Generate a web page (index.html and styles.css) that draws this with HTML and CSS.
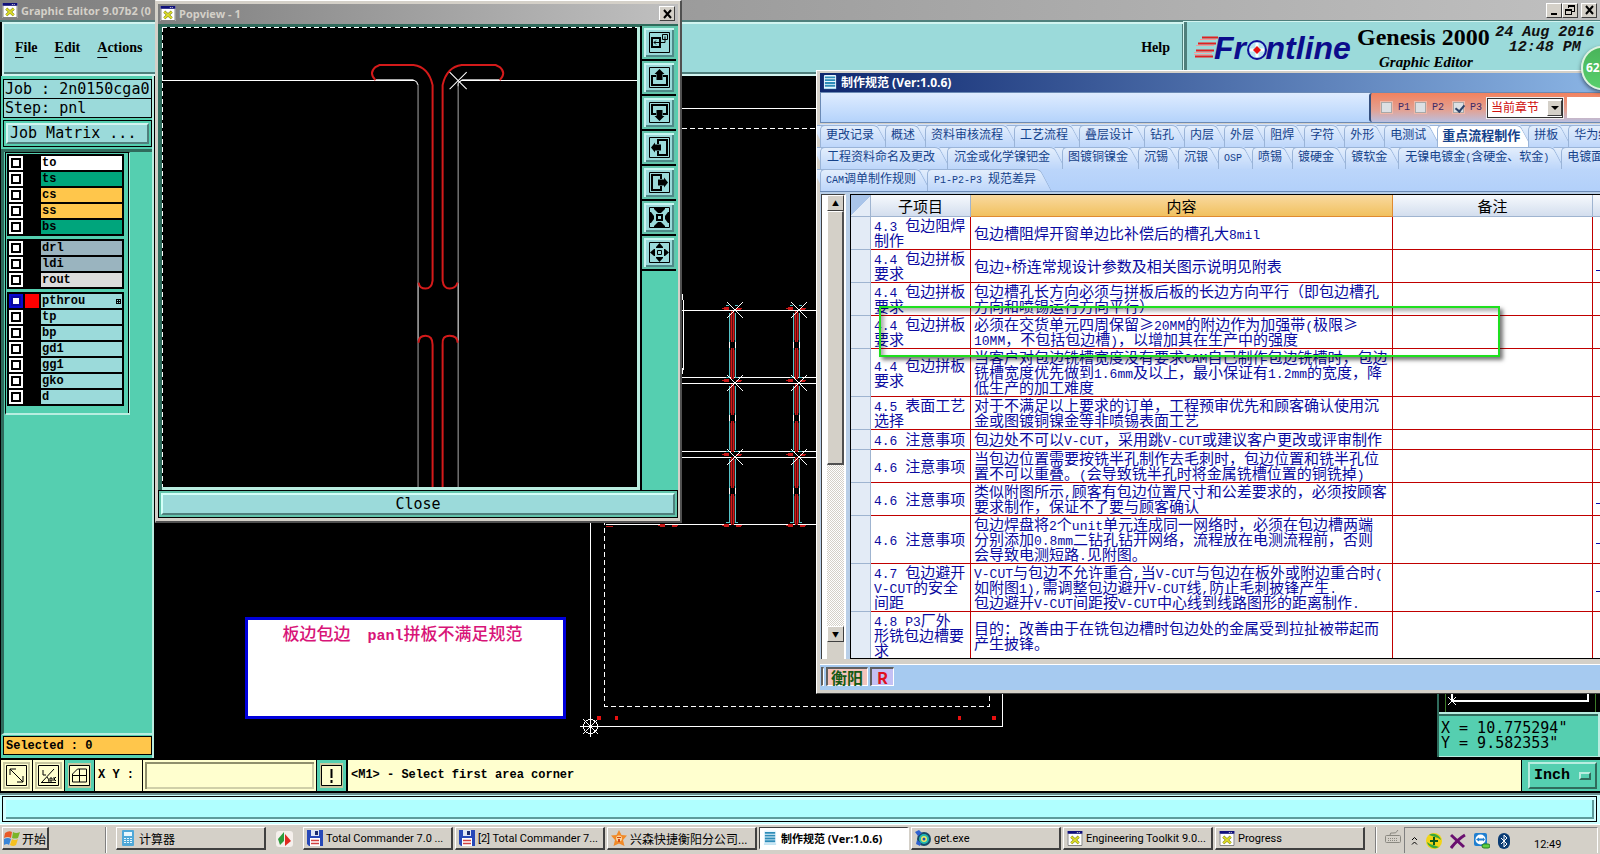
FILE: index.html
```html
<!DOCTYPE html>
<html lang="zh-CN">
<head>
<meta charset="utf-8">
<title>Graphic Editor 9.07b2</title>
<link rel="stylesheet" href="styles.css">
</head>
<body>
<svg class="defs" aria-hidden="true">
  <symbol id="xwin" viewBox="0 0 16 16"><path fill="#fff" d="M0 0h16v16H0z"/><path fill="#10107a" d="M0 0h16v3H0z"/><path fill="#ddd" d="M10 1h1v1h-1zM12 1h1v1h-1z"/><path d="M.5 3v12.500h15V3" fill="none" stroke="#777"/><path d="M4 6l8 7M12 6l-8 7" stroke="#777a20" stroke-width="3"/><path d="M4 6l8 7M12 6l-8 7" stroke="#dcdc28" stroke-width="2"/></symbol>
  <symbol id="doc" viewBox="0 0 16 16"><rect x="1" y="0" width="13" height="15" rx="1" fill="#e8f6ff"/><path d="M2 2.500h11M2 5.500h11M2 8.500h11M2 11.500h11" stroke="#2d8cb8" stroke-width="2"/><path d="M1 14.500h13" stroke="#9fd4ea"/></symbol>
  <symbol id="floppy" viewBox="0 0 16 16"><path fill="#2748b8" d="M0 0h16v16H2L0 14z"/><path fill="#dfe6f4" d="M4 0h8v6H4z"/><path fill="#1b2c70" d="M8 1h3v4H8z"/><path fill="#fff" d="M3 8h10v8H3z"/><path d="M4 10.500h8M4 13.500h8" stroke="#d04040" stroke-width="1.500"/></symbol>
</svg>

<main class="editor">
  <header class="titlebar">
    <svg width="16" height="15"><use href="#xwin"/></svg>
    <h1>Graphic Editor 9.07b2 (0</h1>
    <div class="winbtns">
      <button aria-label="Minimize"><svg width="11" height="10"><path d="M2 8h6v2H2z"/></svg></button>
      <button aria-label="Restore"><svg width="11" height="10"><path d="M3.500 0v3M3 .500h7M3 1.500h7M9.500 0v6M7 6.500h3M.500 4v6M0 4.500h7M0 5.500h7M6.500 4v6M0 9.500h7" fill="none" stroke="#000"/></svg></button>
      <button class="last" aria-label="Close editor"><svg width="11" height="10"><path d="M2 1l7 8M9 1L2 9" stroke="#000" stroke-width="2"/></svg></button>
    </div>
  </header>

  <div class="menurow">
    <nav class="menubar">
      <button><u>F</u>ile</button><button><u>E</u>dit</button><button><u>A</u>ctions</button><button class="help">Help</button>
    </nav>
    <section class="brand">
      <svg class="logo" width="165" height="34" viewBox="1191 31 165 34">
        <g stroke="#e02020" stroke-width="2"><path d="M1200 37.500h16M1196 43.500h18M1194 50.500h18M1193 56.500h18"/></g>
        <g stroke="#f39a9a"><path d="M1198 39.500h16M1194 45.500h18M1192 52.500h18M1192 54.500h18"/></g>
        <text x="1212" y="59" font-family="Liberation Sans, sans-serif" font-size="32" font-weight="bold" font-style="italic" fill="#0c0c8c">Fr<tspan fill="none">o</tspan>ntline</text>
        <circle cx="1255" cy="50" r="9" fill="#b8e6f0" stroke="#10109a" stroke-width="2"/><path d="M1255 43v14M1248 50h14" stroke="#fff" stroke-width="3"/><path d="M1255 46l4 4-4 4-4-4z" fill="#e81010"/>
      </svg>
      <div class="product"><strong>Genesis 2000</strong><em>Graphic Editor</em></div>
      <time>24 Aug 2016<br>12:48 PM</time>
    </section>
  </div>

  <div class="work">
    <aside class="side">
      <dl class="job"><div><dt>Job :</dt><dd>2n0150cga0</dd></div><div><dt>Step:</dt><dd>pnl</dd></div></dl>
      <div class="matrix"><button>Job Matrix ...</button></div>
      <div class="layers">
        <div class="frame">
          <div class="group">
            <label><input type="checkbox"><i></i><span class="w">to</span></label>
            <label><input type="checkbox"><i></i><span class="g">ts</span></label>
            <label><input type="checkbox"><i></i><span class="o">cs</span></label>
            <label><input type="checkbox"><i></i><span class="o">ss</span></label>
            <label><input type="checkbox"><i></i><span class="g">bs</span></label>
          </div>
          <div class="group">
            <label><input type="checkbox"><i></i><span class="s">drl</span></label>
            <label><input type="checkbox"><i></i><span class="s">ldi</span></label>
            <label><input type="checkbox"><i></i><span class="l">rout</span></label>
          </div>
          <div class="group">
            <label><input type="checkbox" checked><i class="red"></i><span>pthrou<svg width="5" height="5"><path d="M0 .500h5M0 2.500h5M0 4.500h5M.500 0v5M2.500 0v5M4.500 0v5" stroke="#000"/></svg></span></label>
            <label><input type="checkbox"><i></i><span>tp</span></label>
            <label><input type="checkbox"><i></i><span>bp</span></label>
            <label><input type="checkbox"><i></i><span>gd1</span></label>
            <label><input type="checkbox"><i></i><span>gg1</span></label>
            <label><input type="checkbox"><i></i><span>gko</span></label>
            <label><input type="checkbox"><i></i><span>d</span></label>
          </div>
        </div>
      </div>
      <div class="selected"><output>Selected : 0</output></div>
    </aside>

    <section class="canvas" aria-label="Panel view">
      <svg class="board" width="1446" height="682" viewBox="154 76 1446 682" fill="none" shape-rendering="crispEdges">
        <defs>
          <g id="seg"><path d="M.500 0v31M.500 37v31" stroke="#5c0c0c"/><path d="M-1.500 2v27M2.500 2v27M-1.500 39v27M2.500 39v27" stroke="#6a1010"/><path d="M-2.500 2v29M3.500 2v29M-2.500 37v29M3.500 37v29" stroke="#55c4c8"/><path d="M-2.500 31v6M3.500 31v6" stroke="#fff"/><path d="M-.500 0v31M1.500 0v31M-.500 37v31M1.500 37v31" stroke="#d01a1a"/></g>
          <g id="joint"><path d="M-10 3.500h7M4 3.500h6M-8 2.500h5M-8 4.500h5M4 4.500h5" stroke="#c81818"/><path d="M-3 .500h-3M3 .500h3" stroke="#55c4c8"/></g>
          <path id="xmark" d="M-8 -8L8 8M8 -8L-8 8" stroke="#fff"/>
        </defs>
        <g stroke="#fff">
          <path d="M682 108.500h134M682 310.500h134M682 377.500h134M682 383.500h134M682 451.500h134M682 457.500h134M606 524.500h210M683.500 300v70M682.500 294v6M682.500 368v6"/>
          <path d="M590.500 520v206.500h412V690"/>
          <path d="M682 128.500h134M604.500 520v186h385V690" stroke-dasharray="5 3"/>
          <path d="M580 726.500h21M590.500 716v21M583 719l15 15M598 719l-15 15"/><circle cx="590.500" cy="726.500" r="7"/>
        </g>
        <g><use href="#seg" x="732" y="311"/><use href="#seg" x="732" y="384"/><use href="#seg" x="732" y="457"/><use href="#seg" x="796" y="311"/><use href="#seg" x="796" y="384"/><use href="#seg" x="796" y="457"/></g>
        <g><use href="#joint" x="732" y="305"/><use href="#joint" x="732" y="377"/><use href="#joint" x="732" y="451"/><use href="#joint" x="732" y="522"/><use href="#joint" x="796" y="305"/><use href="#joint" x="796" y="377"/><use href="#joint" x="796" y="451"/><use href="#joint" x="796" y="522"/><use href="#joint" x="668" y="522"/><path d="M606 526.500h7" stroke="#c81818"/></g>
        <g><use href="#xmark" x="735" y="310"/><use href="#xmark" x="735" y="383"/><use href="#xmark" x="735" y="457"/><use href="#xmark" x="799" y="310"/><use href="#xmark" x="799" y="383"/><use href="#xmark" x="799" y="457"/></g>
        <path fill="#e81010" d="M597 716h4v4h-4zM615 716h3v4h-3zM958 716h3v4h-3zM992 716h4v4h-4z"/>
      </svg>
      <p class="note">板边包边　<span class="mono">panl</span>拼板不满足规范</p>
      <div class="readout">
        <svg width="160" height="20" fill="none"><path d="M6.500 0v20M156.500 0v20" stroke="#3c7a28"/><path d="M13 0v9h136V0" stroke="#fff" stroke-width="2"/><path d="M9 5l8 8M17 5l-8 8" stroke="#fff"/></svg>
        <pre>X = 10.775294"
Y = 9.582353"</pre>
      </div>
    </section>
  </div>

  <form class="command">
    <button type="button" aria-label="Rectangle"><svg width="21" height="21"><path d="M.500 .500h20v20H.500z"/><path d="M4 4l13 13M4 10V4h6M17 11v6h-6"/></svg></button>
    <button type="button" aria-label="Angle"><svg width="21" height="21"><path d="M.500 .500h20v20H.500z"/><path d="M4 17L16 4M3 17.500h15M5 5v5h3M12 13h2v3h-2zM16 12v4M18 12l-2 2 2 2M9 12q2 2 2 5"/></svg></button>
    <button type="button" class="teal" aria-label="Grid"><svg width="21" height="21"><path d="M.500 .500h20v20H.500z"/><path d="M3.500 9l5-5h9v13h-14zM10.500 4v13M3 10.500h14"/></svg></button>
    <label for="xy">X Y :</label><input id="xy" type="text">
    <button type="button" class="teal warn" aria-label="Alert"><svg width="21" height="21"><path d="M.500 .500h20v20H.500z"/><path d="M10.500 4v9M10.500 15v3" stroke-width="2"/></svg></button>
    <output class="prompt">&lt;M1&gt; - Select first area corner</output>
    <div class="units"><button type="button">Inch<i></i></button></div>
  </form>
  <div class="message"><div></div></div>

  <footer class="taskbar">
    <button class="start"><svg width="16" height="16"><path d="M1 3q4-3 7-1L7 8Q4 6 0 8z" fill="#e85a28"/><path d="M9 2q3 2 7 0l-2 6q-3 1-6 0z" fill="#7ab52a"/><path d="M0 9q4-2 7 0l-2 6q-2-2-5 0z" fill="#3a86d8"/><path d="M8 9q3 2 6 0l-2 6q-3 2-6 0z" fill="#f4c020"/></svg>开始</button>
    <i class="grip"></i>
    <div class="tasks">
      <button><svg width="16" height="16"><rect x="2" width="12" height="16" rx="1" fill="#4fa8d8"/><path fill="#e8f8ff" d="M4 2h8v4H4z"/><path d="M4 8.500h8M4 10.500h8M4 12.500h8" stroke="#e8f8ff" stroke-dasharray="2 1"/></svg><span class="cjk">计算器</span></button>
      <svg class="quick" width="17" height="16"><rect width="17" height="16" rx="3" fill="#f5f0ec"/><path d="M2 8l6-7v9l-4 4z" fill="#2d9c3c"/><path d="M9 3l6 7-6 5z" fill="#e02a20"/></svg>
      <button><svg width="16" height="16"><use href="#floppy"/></svg>Total Commander 7.0 ...</button>
      <button><svg width="16" height="16"><use href="#floppy"/></svg>[2] Total Commander 7...</button>
      <button><svg width="16" height="16"><path d="M8 0l2.500 5 5.500.500-4 4.500 1.500 6L8 13.500 2.500 16 4 10 0 5.500 5.500 5z" fill="#f08a28"/><circle cx="8" cy="8.500" r="3" fill="#fbd49a"/><path d="M6 7h4v1H6zM7 9h2v3H7z" fill="#d04818"/></svg><span class="cjk">兴森快捷衡阳分公司...</span></button>
      <button class="active"><svg width="15" height="16"><use href="#doc"/></svg><b>制作规范 (Ver:1.0.6)</b></button>
      <button><svg width="16" height="16"><circle cx="9" cy="9" r="7" fill="#164a6a"/><circle cx="9" cy="9" r="5" fill="#23b8b0"/><circle cx="9" cy="9" r="3" fill="#f0e860"/><circle cx="9" cy="9" r="1.500" fill="#2050b0"/><path d="M0 2l4-2 3 3-4 3zM2 10l4 3-1 3-4-2z" fill="#2e62d0"/></svg>get.exe</button>
      <button><svg width="16" height="15"><use href="#xwin"/></svg>Engineering Toolkit 9.0...</button>
      <button><svg width="16" height="15"><use href="#xwin"/></svg>Progress</button>
    </div>
    <i class="grip"></i>
    <svg class="kbd" width="16" height="16" fill="none" stroke="#8a8880"><rect x=".500" y="6.500" width="15" height="7" rx="1"/><path d="M3 9.500h10M3 11.500h10" stroke-dasharray="1 1"/><path d="M5 6q0-3 3-2t5-3"/></svg>
    <div class="tray">
      <svg width="7" height="10" fill="none" stroke="#000"><path d="M1 4l2.500-2.500L6 4M1 8.500L3.500 6 6 8.500"/></svg>
      <svg width="16" height="16"><circle cx="8" cy="8" r="8" fill="#f2d416"/><path d="M3 2a8 8 0 0 1 12 5l-3-2z" fill="#3aa83a"/><path d="M13 14A8 8 0 0 1 1 9l3 2z" fill="#3aa83a"/><path d="M8 4v8M4 8h8" stroke="#0c5a1c" stroke-width="2"/></svg>
      <svg width="16" height="16"><path d="M1 2l13 12M15 2Q8 6 1 15" stroke="#6a1070" stroke-width="3" fill="none"/></svg>
      <svg width="16" height="16"><rect width="13" height="13" rx="2" fill="#1f7fd0"/><circle cx="6.500" cy="6.500" r="5" fill="#fff"/><path d="M2 6.500l3-2v1h4v-1l2 2-2 2v-1H5v1z" fill="#1f7fd0"/><rect x="8" y="11" width="8" height="4" rx="2" fill="#5fd040" stroke="#288020"/></svg>
      <svg width="12" height="16"><rect width="12" height="16" rx="6" fill="#0b3c74"/><path d="M3 5l6 6-3 3V2l3 3-6 6" fill="none" stroke="#fff"/></svg>
      <time>12:49</time>
    </div>
  </footer>
</main>

<section class="popview" aria-label="Popview">
  <header class="titlebar"><svg width="16" height="15"><use href="#xwin"/></svg><h2>Popview - 1</h2>
    <div class="winbtns"><button aria-label="Close popview"><svg width="11" height="10"><path d="M2 1l7 8M9 1L2 9" stroke="#000" stroke-width="2"/></svg></button></div></header>
  <div class="popbody">
    <svg class="popcanvas" viewBox="162 28 476 459" preserveAspectRatio="xMinYMin slice" fill="none">
      <path d="M162 28.500h476M162.500 28v459" stroke="#fff" stroke-dasharray="5 3" shape-rendering="crispEdges"/>
      <path d="M162 81.500h252q3 1 3 4M457.500 87V84l3-2.500H638M417.500 283v58M457.500 283v58" stroke="#fff"/>
      <path d="M417.500 85v198M457.500 85v198M417.500 341v146M457.500 341v146M375 80.500h38M461 80.500h38" stroke="#a8a8a8"/>
      <g stroke="#d41a1a" stroke-width="2"><path d="M375 81Q368 74 375 68L379 66h34Q428 68 432 86V281Q431 289 425 289T418 283"/><path d="M499 81Q506 74 499 68L495 66H461Q446 68 442 86V281Q443 289 449 289T457 283"/><path d="M418 343Q418 336 425 336T432 345V487M457 343Q457 336 449 336T442 345V487"/></g>
      <path d="M449 73l17 17M466 73l-17 17" stroke="#fff"/>
    </svg>
    <div class="tools">
      <button aria-label="Overview"><svg width="21" height="21"><path d="M.500 .500h20v20H.500z"/><path d="M3 6h8v9H3z" stroke-width="2"/><path d="M13.500 2.500h5v5h-5zM12 10.500h4v-6M5 10.500h5M7 8.500l-2 2 2 2"/></svg></button>
      <button aria-label="Up"><svg width="21" height="21"><path d="M.500 .500h20v20H.500z"/><path d="M7 9H3v9h15V9h-4" stroke-width="2"/><path class="f" d="M10.500 2l5 5h-2v6h-6V7h-2z"/></svg></button>
      <button aria-label="Down"><svg width="21" height="21"><path d="M.500 .500h20v20H.500z"/><path d="M7 12H3V3h15v9h-4" stroke-width="2"/><path class="f" d="M10.500 19l5-5h-2V8h-6v6h-2z"/></svg></button>
      <button aria-label="Left"><svg width="21" height="21"><path d="M.500 .500h20v20H.500z"/><path d="M9 7V3h9v15H9v-4" stroke-width="2"/><path class="f" d="M2 10.500l4-5v2h6v6H6v2z"/></svg></button>
      <button aria-label="Right"><svg width="21" height="21"><path d="M.500 .500h20v20H.500z"/><path d="M12 7V3H3v15h9v-4" stroke-width="2"/><path class="f" d="M19 10.500l-4-5v2H9v6h6v2z"/></svg></button>
      <button aria-label="Zoom in"><svg width="21" height="21"><path d="M.500 .500h20v20H.500z"/><path d="M8 8h5v5H8z" stroke-width="2"/><path class="f" d="M5 1h11v1l-4 4H9L5 2zM5 20h11v-1l-4-4H9l-4 4zM1 5v11h1l3-4V9L2 5zM20 5v11h-1l-3-4V9l3-4z"/></svg></button>
      <button aria-label="Zoom out"><svg width="21" height="21"><path d="M.500 .500h20v20H.500z"/><path d="M8.500 8.500h4v4h-4z"/><path class="f" d="M7 6h7V5l-3.500-4L7 5zM7 15h7v1l-3.500 4L7 16zM6 7v7H5l-4-3.500L5 7zM15 7v7h1l4-3.500L16 7z"/></svg></button>
    </div>
  </div>
  <div class="closerow"><button>Close</button></div>
</section>

<section class="spec" aria-label="制作规范">
  <header class="spectitle"><svg width="15" height="15"><use href="#doc"/></svg><h2>制作规范 (Ver:1.0.6)</h2></header>
  <div class="toolbar">
    <form>
      <label><input type="checkbox"><span class="m">P1</span></label>
      <label><input type="checkbox"><span class="m">P2</span></label>
      <label><input type="checkbox" checked><span class="m">P3</span></label>
      <div class="combo"><select aria-label="章节"><option>当前章节</option></select><i></i></div>
      <input class="find" type="text" aria-label="查找">
    </form>
  </div>
  <nav class="tabs">
    <div><button class="mid">更改记录</button><button>概述</button><button class="mid">资料审核流程</button><button class="mid">工艺流程</button><button class="mid">叠层设计</button><button>钻孔</button><button>内层</button><button>外层</button><button>阻焊</button><button>字符</button><button>外形</button><button class="mid">电测试</button><button class="on">重点流程制作</button><button>拼板</button><button>华为终端</button></div>
    <div><button class="long">工程资料命名及更改</button><button class="long">沉金或化学镍钯金</button><button>图镀铜镍金</button><button>沉锡</button><button>沉银</button><button><span class="m">OSP</span></button><button>喷锡</button><button class="mid">镀硬金</button><button class="mid">镀软金</button><button class="long">无镍电镀金<span class="m">(</span>含硬金、软金<span class="m">)</span></button><button>电镀面积</button></div>
    <div><button class="mid"><span class="m">CAM</span>调单制作规则</button><button class="long"><span class="m">P1-P2-P3 </span>规范差异</button></div>
  </nav>
  <div class="sheet">
    <div class="scroller"><div class="sb"><button aria-label="向上">▲</button><i class="thumb"></i><i class="track"></i><button aria-label="向下">▼</button><i class="end"></i></div></div>
    <div class="grid">
      <table>
        <colgroup><col class="c0"><col class="c1"><col class="c2"><col class="c3"><col class="c4"></colgroup>
        <thead><tr><th class="corner"></th><th>子项目</th><th class="hot">内容</th><th>备注</th><th></th></tr></thead>
        <tbody>
        <tr><th></th><td><span class="m">4.3 </span>包边阻焊<br>制作</td><td>包边槽阻焊开窗单边比补偿后的槽孔大<span class="m">8mil</span></td><td></td><td></td></tr>
        <tr><th></th><td><span class="m">4.4 </span>包边拼板<br>要求</td><td>包边<span class="m">+</span>桥连常规设计参数及相关图示说明见附表</td><td></td><td><a href="#"></a></td></tr>
        <tr><th></th><td><span class="m">4.4 </span>包边拼板<br>要求</td><td>包边槽孔长方向必须与拼板后板的长边方向平行（即包边槽孔<br>方向和喷锡运行方向平行）</td><td></td><td></td></tr>
        <tr><th></th><td><span class="m">4.4 </span>包边拼板<br>要求</td><td>必须在交货单元四周保留≥<span class="m">20MM</span>的附边作为加强带<span class="m">(</span>极限≥<br><span class="m">10MM</span>，不包括包边槽<span class="m">)</span>，以增加其在生产中的强度</td><td></td><td></td></tr>
        <tr><th></th><td><span class="m">4.4 </span>包边拼板<br>要求</td><td>当客户对包边铣槽宽度没有要求<span class="m">CAM</span>自己制作包边铣槽时，包边<br>铣槽宽度优先做到<span class="m">1.6mm</span>及以上，最小保证有<span class="m">1.2mm</span>的宽度，降<br>低生产的加工难度</td><td></td><td></td></tr>
        <tr><th></th><td><span class="m">4.5 </span>表面工艺<br>选择</td><td>对于不满足以上要求的订单，工程预审优先和顾客确认使用沉<br>金或图镀铜镍金等非喷锡表面工艺</td><td></td><td></td></tr>
        <tr><th></th><td><span class="m">4.6 </span>注意事项</td><td>包边处不可以<span class="m">V-CUT</span>，采用跳<span class="m">V-CUT</span>或建议客户更改或评审制作</td><td></td><td></td></tr>
        <tr><th></th><td><span class="m">4.6 </span>注意事项</td><td>当包边位置需要按铣半孔制作去毛刺时，包边位置和铣半孔位<br>置不可以重叠。<span class="m">(</span>会导致铣半孔时将金属铣槽位置的铜铣掉<span class="m">)</span></td><td></td><td></td></tr>
        <tr><th></th><td><span class="m">4.6 </span>注意事项</td><td>类似附图所示<span class="m">,</span>顾客有包边位置尺寸和公差要求的，必须按顾客<br>要求制作，保证不了要与顾客确认</td><td></td><td><a href="#"></a></td></tr>
        <tr><th></th><td><span class="m">4.6 </span>注意事项</td><td>包边焊盘将<span class="m">2</span>个<span class="m">unit</span>单元连成同一网络时，必须在包边槽两端<br>分别添加<span class="m">0.8mm</span>二钻孔钻开网络，流程放在电测流程前，否则<br>会导致电测短路<span class="m">.</span>见附图。</td><td></td><td><a href="#"></a></td></tr>
        <tr><th></th><td><span class="m">4.7 </span>包边避开<br><span class="m">V-CUT</span>的安全<br>间距</td><td><span class="m">V-CUT</span>与包边不允许重合<span class="m">,</span>当<span class="m">V-CUT</span>与包边在板外或附边重合时<span class="m">(</span><br>如附图<span class="m">1),</span>需调整包边避开<span class="m">V-CUT</span>线<span class="m">,</span>防止毛刺披锋产生<span class="m">.</span><br>包边避开<span class="m">V-CUT</span>间距按<span class="m">V-CUT</span>中心线到线路图形的距离制作<span class="m">.</span></td><td></td><td><a href="#"></a></td></tr>
        <tr><th></th><td><span class="m">4.8 P3</span>厂外<br>形铣包边槽要<br>求</td><td>目的：改善由于在铣包边槽时包边处的金属受到拉扯被带起而<br>产生披锋。</td><td></td><td></td></tr>
        </tbody>
      </table>
    </div>
  </div>
  <footer class="status"><i></i><span class="site">衡阳</span><span class="mode">R</span></footer>
</section>
<div class="marker"></div>
<div class="badge">62</div>
</body>
</html>
```

FILE: styles.css
```css
* { box-sizing: border-box; }
html, body { height: 100%; }
body {
  margin: 0; overflow: hidden; position: relative; background: #000;
  font-family: "Open Sans", "Noto Sans CJK SC", sans-serif; font-size: 11px; color: #000;
}
button, input, select { font: inherit; color: inherit; margin: 0; padding: 0; border: 0; border-radius: 0; background: none; }
h1, h2, p, dl, dd, pre { margin: 0; font: inherit; }
svg { display: block; flex: none; }
.defs { position: absolute; width: 0; height: 0; }
.mono { font-family: "Liberation Mono", monospace; font-size: 15px; font-weight: bold; }

.editor { display: flex; flex-direction: column; height: 100%; }
.titlebar {
  display: flex; align-items: center; gap: 3px; height: 20px; flex: none; padding: 0 3px 0 2px;
  background: linear-gradient(90deg, #808080, #c0c0c0); color: #d4d0c8; font-weight: bold; white-space: nowrap;
}
.titlebar h1, .titlebar h2 { font-size: 11px; }
.winbtns { margin-left: auto; display: flex; }
.winbtns button {
  width: 16px; height: 15px; display: grid; place-items: center; background: #d4d0c8;
  border: 1px solid; border-color: #fff #404040 #404040 #fff;
}
.winbtns .last { margin-left: 3px; }

.menurow { display: flex; height: 56px; flex: none; border-top: 2px solid #4f7f7c; }
.menubar {
  flex: 1; display: flex; align-items: center; padding: 0 13px 4px 10px; gap: 15px; margin-left: 2px;
  background: #9bdada; border: 2px solid #d2f4f0; border-width: 2px 0 0 2px;
  box-shadow: inset -2px 0 #4f7f7c, inset 0 -2px #d2f4f0, inset 0 -4px #4f7f7c;
  font-family: "Liberation Serif", serif; font-size: 14px; font-weight: bold;
}
.menubar button { padding: 0 1px; }
.menubar u { text-underline-offset: 5px; }
.menubar .help { margin-left: auto; }
.brand {
  width: 416px; flex: none; display: flex; padding: 3px 0 0 6px; background: #9bdada;
  border-left: 3px solid #4f7f7c; box-shadow: inset 0 -2px #d2f4f0; outline: 1px solid #d2f4f0;
}
.logo { margin-top: 6px; }
.product { display: flex; flex-direction: column; margin-left: -1px; font-family: "Liberation Serif", serif; font-weight: bold; white-space: nowrap; }
.product strong { font-size: 24px; line-height: 24px; }
.product em { font-size: 15px; line-height: 20px; padding-left: 22px; margin-top: 3px; }
.brand time {
  flex: 1; text-align: center; font: italic bold 15px/15px "Liberation Mono", monospace; white-space: nowrap; color: #111;
}

.work { flex: 1; min-height: 0; display: flex; }
.side {
  width: 154px; flex: none; display: flex; flex-direction: column; background: #55cfb0;
  border-left: 1px solid #000; border-right: 2px solid #b9ede0;
  font-family: "Liberation Mono", monospace;
}
.job { margin: 3px 0 0 2px; border: 1px solid #000; background: #000; display: grid; gap: 1px; font: 15px "DejaVu Sans Mono", monospace; }
.job div { display: flex; gap: 9px; height: 18px; line-height: 18px; padding-left: 1px; background: #9bdada; }
.matrix { margin: 2px 0 0 2px; border: 1px solid #000; padding: 2px; height: 27px; }
.matrix button {
  width: 100%; height: 21px; background: #9bdada; text-align: left; padding-left: 2px; font: 15px/15px "DejaVu Sans Mono", monospace;
  border: 2px solid; border-color: #d2f4f0 #4f7f7c #4f7f7c #d2f4f0;
}
.layers { margin-top: 2px; flex: 1; border-top: 3px solid #2f6b5c; border-left: 3px solid #2f6b5c; border-bottom: 2px solid #b9ede0; }
.frame { width: 125px; border: 1px solid #000; border-right-color: #b9ede0; box-shadow: inset -1px 0 #000; margin: 0 0 0 1px; padding: 1px 0 7px 1px; display: grid; gap: 3px; border-bottom: 2px solid #b9ede0; font-size: 12px; font-weight: bold; }
.group { width: 117px; padding: 2px; background: #000; display: grid; gap: 2px; }
.group label { display: flex; gap: 2px; height: 14px; line-height: 14px; }
.group input { appearance: none; width: 14px; height: 14px; border: 2px solid #fff; background: #fff; box-shadow: inset 0 0 0 2px #000; }
.group input:checked { border-color: #0a0ad0; box-shadow: inset 0 0 0 2px #0808a0; }
.group i { width: 14px; }
.group i.red { background: #f00; }
.group span { flex: 1; padding: 0 1px; background: #9bdada; display: flex; align-items: center; justify-content: space-between; }
.group .w { background: #fff; } .group .g { background: #00a57c; } .group .o { background: #ffc64b; }
.group .s { background: #9ab4bf; } .group .l { background: #dcdcdc; }
.selected { padding: 1px 0 3px 2px; }
.selected output { display: block; height: 19px; line-height: 18px; padding-left: 2px; border: 1px solid #000; background: #ffc64b; font-size: 12px; font-weight: bold; }

.canvas { flex: 1; min-width: 0; background: #000; position: relative; overflow: hidden; border-bottom: 1px solid #000; }
.board { position: absolute; left: 0; top: 0; }
.note {
  position: absolute; left: 91px; top: 541px; width: 321px; height: 102px; padding: 3px 6px 0 0; text-align: center;
  background: #fff; border: 3px solid #0000dc; color: #d81478; font: 500 17px/20px "Noto Sans CJK SC", sans-serif; white-space: nowrap;
}
.readout { position: absolute; right: 0; bottom: 0; width: 163px; background: #000; border-left: 2px solid #2f6b5c; }
.readout pre {
  background: #55cfb0; border: solid #b9ede0; border-width: 2px 2px 1px 0; box-shadow: inset 0 2px #2f6b5c;
  padding: 7px 2px 5px; font: 15px/15px "DejaVu Sans Mono", monospace;
}

.command { display: flex; height: 35px; flex: none; padding: 2px 0 2px 1px; gap: 1px; background: #000; font: bold 12px "Liberation Mono", monospace; }
.command > button {
  width: 31px; display: grid; place-items: center; background: #ffffcf; box-shadow: inset 0 0 0 2px #ffffcf, inset 0 0 0 4px #c8c8a0;
}
.command > .teal { width: 29px; background: #ffffcf; box-shadow: inset 0 0 0 3px #55cfb0, inset 0 0 0 5px #c8c8a0; }
.command svg { fill: none; stroke: #000; }
.command label { width: 47px; background: #ffffcf; line-height: 31px; padding-left: 3px; }
.command input { width: 173px; background: #ffffcf; border: 2px solid #ffffcf; box-shadow: inset 2px 2px #8f8f6c, inset -2px -2px #d0d0a8; padding: 0 6px; }
.prompt { flex: 1; margin-left: 1px; padding-left: 3px; background: #ffffcf; line-height: 31px; white-space: nowrap; }
.units { width: 78px; padding: 2px 3px 2px 6px; background: #55cfb0; }
.units button {
  width: 100%; height: 100%; display: flex; justify-content: space-between; align-items: center; padding: 0 4px; font-size: 15px;
  border: 2px solid; border-color: #b9ede0 #2f6b5c #2f6b5c #b9ede0;
}
.units i { width: 12px; height: 8px; border: 2px solid; border-color: #b9ede0 #2f6b5c #2f6b5c #b9ede0; }
.message { height: 31px; flex: none; padding: 1px 3px 2px 2px; background: #cff; border-top: 2px solid #6a8e8e; }
.message div { height: 26px; border: 1px solid #000; background: #b0ffff; box-shadow: inset 3px 3px #d2ffff, inset -2px -2px #d2ffff, inset -4px -4px #5d9c9c; }

.taskbar { height: 30px; flex: none; display: flex; align-items: flex-start; padding: 2px 2px 0; background: #d4d0c8; border-top: 1px solid #fff; font-family: Roboto, "Noto Sans CJK SC", sans-serif; }
.taskbar button {
  height: 23px; display: flex; align-items: center; gap: 3px; padding: 0 0 0 3px; background: #d4d0c8; white-space: nowrap; overflow: hidden;
  border: solid; border-width: 1px 2px 2px 1px; border-color: #fff #404040 #404040 #fff;
}
.taskbar .start { width: 47px; gap: 2px; padding: 0 1px; font-size: 12px; }
.grip { width: 2px; height: 26px; border-left: 1px solid #808080; border-right: 1px solid #fff; flex: none; }
.start + .grip { margin-left: 56px; }
.tasks { flex: 1; display: flex; align-items: center; gap: 2px; padding: 0 10px 0 9px; }
.tasks button { flex: 1 1 0; min-width: 0; }
.quick { margin: 0 8px; }
.cjk { font-size: 12px; }
.tasks b { font: bold 11px "Open Sans", "Noto Sans CJK SC", sans-serif; }
.tasks .active { background: #fff; border-color: #404040 #fff #fff #404040; }
.kbd { margin: 2px 3px 0 8px; }
.tray { width: 194px; height: 26px; display: flex; align-items: center; gap: 8px; padding-left: 6px; border: 1px solid #808080; border-bottom: 0; border-right-color: #fff; }
.tray time { margin-left: 16px; padding-top: 8px; }

.popview { position: absolute; left: 155px; top: 0; width: 527px; background: #d4d0c8; border: solid; border-width: 1px 2px 2px 1px; border-color: #fff #505050 #505050 #d4d0c8; padding: 3px 2px 3px; }
.popview .titlebar { padding: 0 3px 1px 2px; }
.popbody { display: grid; grid-template-columns: 1fr 38px; height: 466px; background: #000; border-left: 4px solid #2f6b5c; border-top: 3px solid #2f6b5c; }
.popcanvas { width: 100%; height: 100%; border: solid #b9ede0; border-width: 0 3px 3px 0; }
.tools { background: #55cfb0; border-left: 2px solid #000; display: grid; gap: 2px; align-content: start; justify-items: start; margin-top: -1px; }
.tools button {
  width: 34px; height: 33px; background: #9bdada; border: 2px solid #63c5ac; display: grid; place-items: center;
  box-shadow: inset 2px 2px #c8f6f2, inset -2px -2px #4f8a88, 0 2px #000;
}
.tools svg { fill: none; stroke: #000; }
.tools .f { fill: #000; stroke: none; }
.closerow { background: #63c5ac; padding: 2px; border: 1px solid #000; }
.closerow button { width: 100%; height: 22px; background: #9bdada; border: 2px solid; border-color: #d2fff8 #4f7f7c #4f7f7c #d2fff8; font: 15px/15px "DejaVu Sans Mono", monospace; }

.spec { position: absolute; left: 816px; right: 0; top: 70px; padding: 2px 0 3px 3px; background: #d4d0c8; border: solid; border-width: 1px 0 1px 1px; border-color: #fff #404040 #404040 #fff; overflow: hidden; }
.m { font-family: "Liberation Mono", monospace; font-size: 13px; line-height: 0; white-space: pre; }
.spectitle { height: 19px; display: flex; align-items: center; gap: 3px; padding: 0 0 1px 3px; color: #fff; font-weight: bold; background: linear-gradient(90deg, #0f286f, #8ab4e4); }
.spectitle h2 { font-size: 12px; }
.toolbar { display: flex; height: 31px; border: 1px solid #6b8ab5; border-right: 0; background: linear-gradient(#dfecff, #b4d3fb); margin-bottom: 1px; }
.toolbar form {
  margin-left: auto; width: 231px; display: flex; align-items: center; gap: 1px; padding-left: 10px; border-left: 2px solid #35507f; border-radius: 3px 0 0 3px;
  background: linear-gradient(#f2825e, #e2a295 60%, #b9bfe0);
}
.toolbar label { display: flex; align-items: center; gap: 6px; width: 33px; color: #3c2a66; }
.toolbar label:nth-child(3) { margin-left: 4px; }
.toolbar label .m { font-size: 10px; }
.toolbar input[type=checkbox] { appearance: none; position: relative; width: 11px; height: 11px; background: #dce0e4; border: 1px solid #a8a8a8; outline: 1px solid #f0b8a8; }
.toolbar input:checked::after { content: ""; position: absolute; left: 3px; top: 0; width: 4px; height: 7px; border: solid #2c4268; border-width: 0 2px 2px 0; transform: rotate(40deg); }
.combo { position: relative; width: 76px; height: 20px; border: 1px solid #333; background: #fff; outline: 1px solid #eee; }
.combo select { appearance: none; width: 100%; height: 18px; padding-left: 3px; color: #d01010; font-size: 12px; }
.combo i { position: absolute; right: 0; top: 1px; width: 15px; height: 16px; background: #d4d0c8; border: 1px solid; border-color: #fff #404040 #404040 #fff; pointer-events: none; }
.combo i::after { content: ""; position: absolute; left: 3px; top: 5px; border: 4px solid transparent; border-top-color: #000; border-bottom: 0; }
.find { flex: 1; min-width: 0; height: 21px; margin-left: 3px; background: #fff; }
.tabs { background: linear-gradient(#cfe1fb, #b2d0fa); font-size: 12px; color: #15428b; border-bottom: 1px solid #6b8ab5; padding-top: 1px; }
.tabs div { display: flex; height: 22px; white-space: nowrap; }
.tabs .m { font-size: 10px; }
.tabs button { position: relative; flex: none; height: 22px; padding: 0 10px 3px 6px; line-height: 18px; z-index: 0; }
.tabs button::before {
  content: ""; position: absolute; inset: 0 -4px 0 -4px; z-index: -1; transform: skewX(28deg); transform-origin: bottom;
  border: 1px solid #9ab4d8; border-width: 1px 1px 0 0; border-radius: 0 5px 0 0; background: linear-gradient(#e3eefc, #bdd6fa);
  clip-path: inset(0 0 0 8px);
}
.tabs button::after { content: ""; position: absolute; inset: 0 20px 0 0; z-index: -1; border: 1px solid #9ab4d8; border-width: 1px 0 0 1px; border-radius: 5px 0 0; background: linear-gradient(#e3eefc, #bdd6fa); }
.tabs .mid { padding-right: 11px; }
.tabs .long { padding-left: 7px; padding-right: 12px; }
.tabs .on { font-size: 13px; font-weight: bold; padding: 0 8px 3px 5px; }
.tabs .on::before, .tabs .on::after { background: #fff; }

.sheet { display: flex; background: #b9cfe8; height: 467px; overflow: hidden; padding-top: 2px; }
.scroller { width: 25px; margin-left: 1px; padding-left: 5px; background: #fff; border: 1px solid #404040; border-right: 2px solid #fff; border-bottom: 0; }
.sb { height: 100%; display: flex; flex-direction: column; background: #d4d0c8; }
.sb button { height: 16px; font-size: 7px; line-height: 7px; background: #d4d0c8; border: 1px solid; border-color: #fff #404040 #404040 #fff; }
.thumb { flex: 0 0 254px; border: solid; border-width: 1px 2px 2px 1px; border-color: #fff #505050 #505050 #fff; }
.track { flex: 1; background: repeating-conic-gradient(#fff 0 25%, #d4d0c8 0 50%) 0 0 / 2px 2px; }
.end { height: 17px; }
.grid { flex: 1; min-width: 0; margin-left: 4px; background: #fff; border: 1px solid #000; border-right: 0; overflow: hidden; }
table { table-layout: fixed; width: 842px; border-collapse: separate; border-spacing: 0; }
.c0 { width: 20px; } .c1 { width: 100px; } .c2 { width: 422px; } .c3 { width: 200px; } .c4 { width: 100px; }
td { border: solid #c00000; border-width: 0 1px 1px 0; padding: 0 0 2px 3px; height: 20px; color: #0a0aa0; font: 15px/15px "Noto Sans CJK SC", sans-serif; white-space: nowrap; }
tbody th { background: #e3ebf6; border: solid #9fb4d0; border-width: 0 1px 1px 0; padding: 0; }
tbody tr:last-child td, tbody tr:last-child th { border-bottom: 0; }
thead th { height: 22px; padding: 0; font: 15px/21px "Noto Sans CJK SC", sans-serif; background: linear-gradient(#f6f9fd, #d3deee); border: solid #9fb4d0; border-width: 0 1px 1px 0; }
thead .hot { background: linear-gradient(#f9d99f, #f1c15f); border-color: #e08a30; }
thead .corner { background: linear-gradient(135deg, #a9c4e9 50%, #e4ecf7 50%); }
td a { display: block; width: 8px; height: 11px; border-bottom: 1px solid #0a0aa8; }

.status { display: flex; align-items: center; gap: 2px; height: 31px; padding: 0 0 1px 1px; background: #a6caf0; border-top: 5px solid #d4d0c8; box-shadow: inset 0 1px #fff; font: bold 16px/16px "Noto Sans CJK SC", sans-serif; }
.status > * { border: solid; border-width: 2px 1px 1px 2px; border-color: #606060 #fff #fff #606060; height: 19px; }
.status i { width: 3px; }
.site { padding: 0 4px 0 3px; background: #f4c4bc; color: #145a14; }
.mode { padding: 0 5px; background: #c4c0f4; color: #e01020; }

.marker { position: absolute; left: 879px; top: 306px; width: 621px; height: 51px; border: 2px solid #1ee01e; box-shadow: 3px 3px 4px #0008, inset 3px 3px 4px #0005; }
.badge { position: absolute; right: -23px; top: 46px; width: 42px; height: 44px; border-radius: 50%; background: linear-gradient(#49b45a, #58cf6c); border: 2px solid #dff3df; box-shadow: 0 2px 4px #0008; color: #fff; font-weight: bold; font-size: 12px; line-height: 40px; padding-left: 3px; }
```
